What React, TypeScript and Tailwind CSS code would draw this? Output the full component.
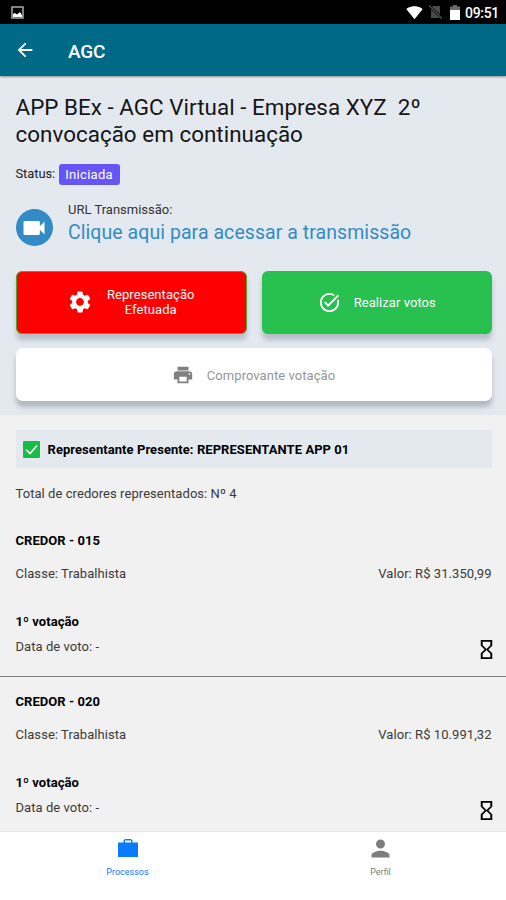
import React from 'react';
import {
  MdArrowBack,
  MdHourglassEmpty,
  MdPerson,
  MdPrint,
  MdSettings,
  MdSignalWifi4Bar,
  MdTaskAlt,
  MdVideocam,
} from 'react-icons/md';

interface Credor {
  id: string;
  classe: string;
  valor: string;
}

const credores: Credor[] = [
  { id: '015', classe: 'Trabalhista', valor: 'R$ 31.350,99' },
  { id: '020', classe: 'Trabalhista', valor: 'R$ 10.991,32' },
];

const StatusBar: React.FC = () => (
  <div className="h-6 shrink-0 bg-black flex items-center justify-between pl-[11px] pr-[7px] text-white">
    <svg className="w-[13px] h-[13px]" viewBox="0 0 13 13">
      <rect x="1" y="1" width="11" height="11" fill="none" stroke="#b8b8b8" strokeWidth="1.4" />
      <path d="M2 11V8l2-1 2 1.5L9 6l2 3v2z" fill="#fff" />
    </svg>
    <div className="flex items-center">
      <MdSignalWifi4Bar className="w-[17px] h-[17px]" />
      <svg className="w-[13px] h-[14px] ml-[6px]" viewBox="0 0 13 14">
        <path d="M4 1h7v12H2V3z" fill="#4b4b4b" />
        <path d="M0 1l13 12" stroke="#000" strokeWidth="2.4" />
        <path d="M0 0.5l13 13" stroke="#5a5a5a" strokeWidth="1.1" />
      </svg>
      <svg className="w-[10px] h-[15px] ml-[8px]" viewBox="0 0 10 15">
        <path d="M3 0h4v1.5h3V5H0V1.5h3z" fill="#6a6a6a" />
        <path d="M0 5h10v10H0z" fill="#fff" />
      </svg>
      <span className="ml-[5px] mt-[2px] text-[14px] leading-none tracking-[-0.3px] font-medium">09:51</span>
    </div>
  </div>
);

const Header: React.FC = () => (
  <header className="h-[52px] shrink-0 bg-[#006a86] flex items-center pl-[14px] text-white shadow-[0_1px_2px_rgba(0,0,0,0.4)] z-10">
    <MdArrowBack className="w-[22px] h-[22px]" />
    <h1 className="ml-8 mt-[3px] text-[19px] tracking-[-0.2px] font-medium">AGC</h1>
  </header>
);

const CredorItem: React.FC<{ credor: Credor }> = ({ credor }) => (
  <div className="h-[160.5px] pl-[15.5px] pr-[14.5px] pt-[15px] border-b border-[#7c7c7c] text-[#3a3a3a]">
    <p className="h-5 font-bold text-black">CREDOR - {credor.id}</p>
    <div className="mt-[13px] h-5 flex justify-between">
      <span>Classe: {credor.classe}</span>
      <span>Valor: {credor.valor}</span>
    </div>
    <p className="mt-7 h-5 font-bold text-black">1º votação</p>
    <div className="mt-[5px] h-5 flex justify-between">
      <span>Data de voto: -</span>
      <MdHourglassEmpty className="w-[23px] h-[23px] mt-[1px] -mr-[6px] text-black" />
    </div>
  </div>
);

const App: React.FC = () => {
  return (
    <div className="w-[506px] h-[900px] overflow-hidden flex flex-col bg-[#f1f1f1] font-['Roboto',sans-serif] text-[13px] leading-5 tracking-[0.06px]">
      <StatusBar />
      <Header />

      <section className="h-[339px] shrink-0 bg-[#e4e9f0] pl-[15.5px] pr-[14.5px] pt-[18px]">
        <h2 className="text-[22.4px] leading-[27px] tracking-[0.03px] text-[#161616] whitespace-pre-wrap">
          {'APP BEx - AGC Virtual - Empresa XYZ  2º\nconvocação em continuação'}
        </h2>
        <div className="mt-4 h-[21px] flex items-center text-[#222]">
          <span className="-mt-[2px] tracking-[-0.1px]">Status:</span>
          <span className="ml-[3.5px] w-[61px] h-[21px] rounded-[3px] bg-[#6554f6] text-white text-center leading-[22px] tracking-[0.3px]">
            Iniciada
          </span>
        </div>
        <div className="mt-[15px] flex h-[46px]">
          <div className="mt-[9px] w-[37px] h-[37px] rounded-full bg-[#338bc6] flex items-center justify-center text-white">
            <MdVideocam className="w-[28px] h-[28px]" />
          </div>
          <div className="ml-[15.5px]">
            <p className="text-[#333] tracking-normal">URL Transmissão:</p>
            <a className="block mt-px text-[19.5px] leading-6 text-[#338bc6]">Clique aqui para acessar a transmissão</a>
          </div>
        </div>
        <div className="mt-[24.5px] flex gap-[15px] text-white text-center leading-[15px]">
          <button className="flex-1 h-[63px] rounded-[6px] border border-[#4fa32a] bg-[#ff0000] flex items-center justify-center shadow-[0_6px_5px_rgba(80,95,100,0.3)]">
            <MdSettings className="w-[26px] h-[26px]" />
            <span className="ml-[13px] w-[90px]">Representação Efetuada</span>
          </button>
          <button className="flex-1 h-[63px] rounded-[6px] bg-[#28c04f] flex items-center justify-center shadow-[0_6px_5px_rgba(80,95,100,0.3)]">
            <MdTaskAlt className="w-[23px] h-[23px]" />
            <span className="ml-[13px] mt-px">Realizar votos</span>
          </button>
        </div>
        <button className="mt-[14.5px] w-full h-[53px] rounded-[7px] bg-white flex items-center justify-center text-[#969696] shadow-[0_6px_5px_rgba(80,95,100,0.35)]">
          <MdPrint className="w-[22px] h-[22px] text-[#808080]" />
          <span className="ml-[13px] mt-[2px]">Comprovante votação</span>
        </button>
      </section>

      <main className="h-[416px] shrink-0 overflow-hidden">
        <div className="ml-[15.5px] mr-[14.5px] mt-[15px] h-[38px] pl-[7.5px] flex items-center bg-[#e4e9f0] text-black font-bold">
          <svg className="w-[17px] h-[17px]" viewBox="0 0 17 17">
            <rect width="17" height="17" rx="1" fill="#17bb45" />
            <path d="M3 8.5l4 4 7-8" fill="none" stroke="#fff" strokeWidth="1.7" />
          </svg>
          <span className="ml-[7.5px] mt-[2px]">Representante Presente: REPRESENTANTE APP 01</span>
        </div>
        <p className="mt-[15.5px] px-[15.5px] h-5 text-[#3a3a3a]">Total de credores representados: Nº 4</p>
        <div className="mt-[12.5px]">
          {credores.map((credor) => (
            <CredorItem key={credor.id} credor={credor} />
          ))}
        </div>
      </main>

      <nav className="flex-1 bg-white flex border-t border-[#e6e6e6] text-[9px] leading-3 tracking-normal">
        <a className="flex-1 flex flex-col items-center pt-[6px] pl-[2px] text-[#0a7aff]">
          <svg className="w-[20px] h-[20px]" viewBox="0 0 20 20" fill="currentColor">
            <path d="M5.5 4.5V2.500L7 1h6l1.500 1.500v2H20V19H0V4.500zm1.500 0h6v-2H7z" />
          </svg>
          <span className="mt-2">Processos</span>
        </a>
        <a className="flex-1 flex flex-col items-center pt-[3px] pl-[2px] text-[#7d7d7d]">
          <MdPerson className="w-[27px] h-[27px]" />
          <span className="mt-1">Perfil</span>
        </a>
      </nav>
    </div>
  );
};

export default App;
